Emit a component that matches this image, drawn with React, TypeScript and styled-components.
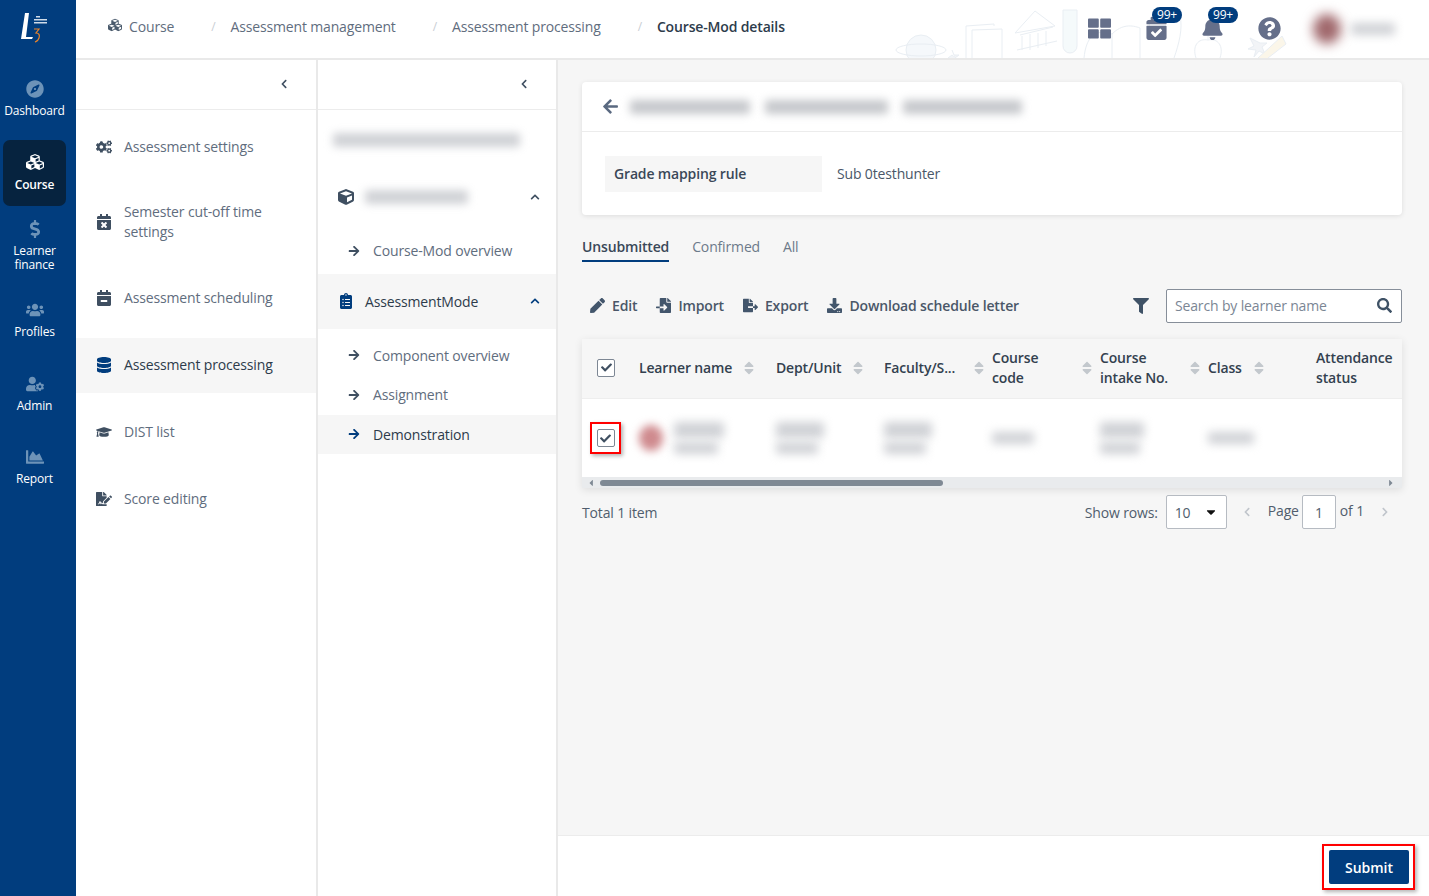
import React from 'react';
import styled, { createGlobalStyle } from 'styled-components';
import {
  FaArrowLeft, FaArrowRight, FaBell, FaCalendarCheck, FaCalendarMinus, FaCalendarTimes, FaCaretDown,
  FaCaretLeft, FaCaretRight, FaChartArea, FaCheck, FaChevronLeft, FaChevronRight, FaChevronUp,
  FaClipboardList, FaCogs, FaCompass, FaCube, FaCubes, FaDatabase, FaDollarSign, FaDownload, FaFileExport,
  FaFileImport, FaFileSignature, FaFilter, FaGraduationCap, FaPen, FaQuestionCircle, FaSearch, FaSortDown,
  FaSortUp, FaThLarge, FaUserCog, FaUsers,
} from 'react-icons/fa';

const GlobalStyle = createGlobalStyle`
  html, body { margin: 0; padding: 0; height: 100%; }
  body {
    font-family: "Open Sans", "Liberation Sans", sans-serif;
    font-size: 14px;
    letter-spacing: -0.15px;
    color: #5f6d7e;
  }
  * { box-sizing: border-box; }
`;

const Shell = styled.div`
  display: flex;
  width: 100vw;
  height: 100vh;
  overflow: hidden;
  background: #f6f6f6;
`;

/* left rail */
const Rail = styled.nav`
  width: 76px;
  flex: none;
  padding-left: 3px;
  background: #013d7e;
  display: flex;
  flex-direction: column;
`;

const Logo = styled.div`
  height: 67px;
  padding: 12px 0 0 17px;
`;

const RailItem = styled.div<{ $top: number; $h: number; $active?: boolean }>`
  width: 63px;
  margin-top: ${p => p.$top}px;
  height: ${p => p.$h}px;
  flex: none;
  padding-top: 13px;
  border-radius: 7px;
  background: ${p => (p.$active ? '#06233f' : 'transparent')};
  color: ${p => (p.$active ? '#fff' : '#6d93b8')};
  display: flex;
  flex-direction: column;
  align-items: center;
  font-size: 18px;
`;

const RailLabel = styled.div<{ $active?: boolean }>`
  margin-top: ${p => (p.$active ? 7 : 6)}px;
  width: 69px;
  font-size: 12px;
  line-height: 14px;
  text-align: center;
  color: #fff;
  font-weight: ${p => (p.$active ? 600 : 400)};
`;

const Body = styled.div`
  flex: 1;
  min-width: 0;
  display: flex;
  flex-direction: column;
`;

/* top bar */
const TopBar = styled.header`
  position: relative;
  height: 60px;
  flex: none;
  background: #fff;
  border-bottom: 2px solid #e9e9e9;
  display: flex;
  align-items: center;
  padding-left: 32px;
`;

const Decor = styled.svg`
  position: absolute;
  left: 812px;
  top: 0;
`;

const Crumb = styled.span<{ $current?: boolean }>`
  display: flex;
  align-items: center;
  gap: 7px;
  margin-top: -5px;
  color: ${p => (p.$current ? '#2d3b4b' : '#5f6d7e')};
  font-weight: ${p => (p.$current ? 600 : 400)};
  svg { color: #4a5a6c; margin-top: -4px; }
`;

const CrumbSep = styled.span`
  margin: -5px 15px 0 37px;
  color: #c9ced4;
  font-size: 12px;
`;

const TopIcons = styled.div`
  position: absolute;
  left: 1012px;
  top: 0;
  height: 58px;
  width: 341px;
  display: flex;
`;

const TopIcon = styled.div<{ $w: number }>`
  position: relative;
  width: ${p => p.$w}px;
  height: 58px;
  padding-top: 15px;
  color: #656f8a;
  font-size: 23px;
`;

const Badge = styled.span`
  position: absolute;
  left: 7px;
  top: 7px;
  width: 30px;
  height: 16px;
  border-radius: 8px;
  background: #013d7e;
  color: #fff;
  font-size: 12px;
  line-height: 16px;
  text-align: center;
`;

const Profile = styled.div`
  position: absolute;
  left: 205px;
  top: 0;
  width: 136px;
  height: 58px;
  background: #fff;
  display: flex;
  align-items: center;
  padding-left: 20px;
  gap: 10px;
`;

const Columns = styled.div`
  flex: 1;
  min-height: 0;
  display: flex;
`;

/* menu panels */
const Panel = styled.aside<{ $w: number }>`
  width: ${p => p.$w}px;
  flex: none;
  background: #fff;
  border-right: 2px solid #e9e9e9;
  display: flex;
  flex-direction: column;
`;

const PanelHead = styled.div`
  height: 50px;
  flex: none;
  border-bottom: 1px solid #ececec;
  display: flex;
  align-items: center;
  justify-content: flex-end;
  padding: 0 27px 2px 0;
  font-size: 10px;
  color: #3f4f61;
`;

const MenuList = styled.div`
  padding-top: 10px;
  display: flex;
  flex-direction: column;
  gap: 12px;
`;

const MenuRow = styled.div<{ $active?: boolean }>`
  min-height: 55px;
  padding: 15px 30px 17px 20px;
  display: flex;
  align-items: center;
  gap: 12px;
  line-height: 20px;
  background: ${p => (p.$active ? '#f6f6f6' : 'transparent')};
  color: ${p => (p.$active ? '#2d3b4b' : '#5f6d7e')};
  svg { flex: none; font-size: 16px; color: ${p => (p.$active ? '#013d7e' : '#3f4f61')}; }
`;

const TreeTitle = styled.div`
  height: 59px;
  padding: 23px 0 0 15px;
`;

const GroupRow = styled.div<{ $active?: boolean }>`
  height: 55px;
  padding: 0 16px 0 20px;
  display: flex;
  align-items: center;
  gap: 11px;
  background: ${p => (p.$active ? '#f6f6f6' : 'transparent')};
  color: #2d3b4b;
  svg { flex: none; color: ${p => (p.$active ? '#013d7e' : '#3f4f61')}; }
`;

const GroupText = styled.span`
  flex: 1;
  min-width: 0;
`;

const SubList = styled.div<{ $top: number; $bottom: number }>`
  padding: ${p => p.$top}px 0 ${p => p.$bottom}px;
`;

const SubRow = styled.div<{ $active?: boolean }>`
  height: 39.5px;
  padding-left: 30px;
  display: flex;
  align-items: center;
  gap: 13px;
  background: ${p => (p.$active ? '#f6f6f6' : 'transparent')};
  color: ${p => (p.$active ? '#2d3b4b' : '#5f6d7e')};
  svg { font-size: 12px; color: ${p => (p.$active ? '#013d7e' : '#3f4f61')}; }
`;

const Blur = styled.div<{ $w: number; $h: number; $c?: string; $round?: boolean; $r?: number }>`
  flex: none;
  width: ${p => p.$w}px;
  height: ${p => p.$h}px;
  background: ${p => p.$c || '#d0d2d6'};
  border-radius: ${p => (p.$round ? '50%' : '3px')};
  filter: blur(${p => p.$r ?? 4}px);
`;

/* main area */
const Main = styled.main`
  flex: 1;
  min-width: 0;
  display: flex;
  flex-direction: column;
`;

const Content = styled.div`
  flex: 1;
  min-height: 0;
  padding: 22px 27px 0 24px;
`;

const Card = styled.section`
  height: 133px;
  background: #fff;
  border-radius: 4px;
  box-shadow: 0 1px 5px rgba(0, 0, 0, 0.1);
`;

const CardHead = styled.div`
  height: 50px;
  border-bottom: 1px solid #ececec;
  padding-left: 20px;
  display: flex;
  align-items: center;
  font-size: 17px;
  color: #5a6980;
`;

const TitleBlurs = styled.div`
  margin-left: 11px;
  display: flex;
  gap: 15px;
`;

const CardBody = styled.div`
  padding: 24px 23px 0;
  display: flex;
  align-items: center;
  gap: 15px;
`;

const FieldLabel = styled.div`
  width: 217px;
  height: 36px;
  padding-left: 9px;
  background: #f6f6f6;
  line-height: 36px;
  font-weight: 600;
  color: #3a4858;
`;

const FieldValue = styled.div`
  margin-top: -2px;
  color: #4a5768;
`;

const Tabs = styled.div`
  margin-top: 22px;
  display: flex;
  gap: 23px;
`;

const Tab = styled.div<{ $active?: boolean }>`
  height: 25px;
  line-height: 20px;
  color: ${p => (p.$active ? '#3a4858' : '#6d7a8a')};
  font-weight: ${p => (p.$active ? 600 : 400)};
  border-bottom: ${p => (p.$active ? '2px solid #013d7e' : 'none')};
`;

const Toolbar = styled.div`
  margin-top: 27px;
  height: 34px;
  display: flex;
  align-items: center;
  padding-left: 8px;
  gap: 19px;
`;

const ToolButton = styled.div`
  display: flex;
  align-items: center;
  gap: 7px;
  padding-bottom: 2px;
  color: #4a5768;
  font-weight: 600;
  svg { font-size: 15px; color: #43566c; }
`;

const FilterIcon = styled.div`
  margin: -2px -2px 0 auto;
  height: 16px;
  font-size: 16px;
  color: #3f5266;
`;

const SearchBox = styled.div`
  width: 236px;
  height: 34px;
  background: #fff;
  border: 1px solid #868e99;
  border-radius: 2px;
  padding: 0 9px 2px 8px;
  display: flex;
  align-items: center;
  justify-content: space-between;
  color: #7b8694;
  svg { color: #3f5266; font-size: 15px; }
`;

const TableWrap = styled.div`
  margin-top: 16px;
  box-shadow: 0 2px 8px rgba(0, 0, 0, 0.1);
`;

const HeadRow = styled.div`
  height: 60px;
  padding: 0 0 2px 15px;
  background: #f6f6f6;
  border-bottom: 1px solid #eeeeee;
  display: grid;
  grid-template-columns: 42px 137px repeat(5, 108px) 1fr;
  align-items: center;
`;

const BodyRow = styled(HeadRow)`
  height: 78px;
  padding-bottom: 0;
  background: #fff;
  border-bottom: none;
`;

const HeadCell = styled.div<{ $spread?: boolean }>`
  display: flex;
  align-items: center;
  gap: 9px;
  width: ${p => (p.$spread ? '97px' : 'auto')};
  justify-content: ${p => (p.$spread ? 'space-between' : 'flex-start')};
  line-height: 20px;
  font-weight: 600;
  color: #33414f;
`;

const SortIcon = styled.span`
  position: relative;
  flex: none;
  width: 10px;
  height: 16px;
  color: #c3c8cd;
  font-size: 16px;
  svg { position: absolute; left: 0; top: 0; }
`;

const CheckBox = styled.div`
  width: 18px;
  height: 18px;
  background: #fff;
  border: 1px solid #7d8794;
  border-radius: 2px;
  display: flex;
  align-items: center;
  justify-content: center;
  color: #3f4f61;
  font-size: 11px;
`;

const Highlight = styled.div`
  width: 31px;
  height: 32px;
  margin-left: -7px;
  border: 2px solid #f00;
  box-shadow: 2px 2px 4px rgba(0, 0, 0, 0.3);
  display: flex;
  align-items: center;
  justify-content: center;
  background: #fff;
`;

const LearnerCell = styled.div`
  display: flex;
  align-items: center;
  gap: 11px;
`;

const BlurStack = styled.div`
  display: flex;
  flex-direction: column;
  gap: 4px;
`;

const ScrollBar = styled.div`
  height: 11px;
  background: #e9ebed;
  padding: 0 6px 0 4px;
  display: flex;
  align-items: center;
  font-size: 10px;
  color: #7f8994;
`;

const ScrollThumb = styled.div`
  width: 343px;
  height: 6px;
  margin-left: 4px;
  margin-right: auto;
  border-radius: 3px;
  background: #7f8994;
`;

const Pager = styled.div`
  margin-top: 7px;
  height: 34px;
  display: flex;
  align-items: center;
  color: #505d6d;
`;

const Total = styled.div`
  margin-right: auto;
`;

const SelectBox = styled.div`
  width: 61px;
  height: 34px;
  margin-left: 8px;
  padding: 0 8px 0 8px;
  background: #fff;
  border: 1px solid #b6bbc2;
  border-radius: 2px;
  display: flex;
  align-items: center;
  justify-content: space-between;
  svg { color: #111; font-size: 14px; }
`;

const PagerArrow = styled.div<{ $left: number; $right: number }>`
  margin: 0 ${p => p.$right}px 0 ${p => p.$left}px;
  font-size: 10px;
  height: 12px;
  color: #c0c5cb;
`;

const PageInput = styled.div`
  width: 34px;
  height: 34px;
  margin: 0 4px 0 3px;
  background: #fff;
  border: 1px solid #b6bbc2;
  border-radius: 2px;
  text-align: center;
  line-height: 34px;
`;

const PagerText = styled.span`
  margin-top: -3px;
`;

const SubmitBar = styled.footer`
  height: 61px;
  flex: none;
  background: #fff;
  border-top: 1px solid #ececec;
  display: flex;
  align-items: center;
  justify-content: flex-end;
  padding-right: 14px;
`;

const SubmitFrame = styled.div`
  padding: 4px 4px 4px 5px;
  border: 2px solid #f00;
  box-shadow: 2px 2px 4px rgba(0, 0, 0, 0.3);
  background: #fff;
  margin-top: 2px;
`;

const SubmitButton = styled.button`
  display: block;
  width: 80px;
  height: 34px;
  border: none;
  border-radius: 2px;
  background: #013d7e;
  color: #fff;
  font: 600 14px "Open Sans", sans-serif;
`;

const railItems = [
  { label: ['Dashboard'], icon: <FaCompass />, top: 0, h: 66 },
  { label: ['Course'], icon: <FaCubes />, top: 7, h: 66, active: true },
  { label: ['Learner', 'finance'], icon: <FaDollarSign />, top: 1, h: 80 },
  { label: ['Profiles'], icon: <FaUsers />, top: 1, h: 66 },
  { label: ['Admin'], icon: <FaUserCog />, top: 8, h: 66 },
  { label: ['Report'], icon: <FaChartArea />, top: 7, h: 66 },
];

const menuItems = [
  { label: 'Assessment settings', icon: <FaCogs /> },
  { label: 'Semester cut-off time settings', icon: <FaCalendarTimes /> },
  { label: 'Assessment scheduling', icon: <FaCalendarMinus /> },
  { label: 'Assessment processing', icon: <FaDatabase />, active: true },
  { label: 'DIST list', icon: <FaGraduationCap /> },
  { label: 'Score editing', icon: <FaFileSignature /> },
];

const L3Logo = () => (
  <svg width="30" height="32" viewBox="0 0 30 32">
    <path d="M5 1h4L6 25h7l-1 2H1z" fill="#fff" />
    <path d="M14 17h5l-3 4c3 0 4 2 3 5s-2 3-4 4" fill="none" stroke="#e8832a" strokeWidth="1.2" />
    <rect x="16" y="4" width="4" height="1.5" fill="#cfdbe8" />
    <rect x="14" y="7" width="13" height="1.5" fill="#cfdbe8" />
    <rect x="14" y="10" width="13" height="1.5" fill="#cfdbe8" />
  </svg>
);

const Sort = () => (
  <SortIcon>
    <FaSortUp />
    <FaSortDown />
  </SortIcon>
);

const Tick = () => (
  <CheckBox>
    <FaCheck />
  </CheckBox>
);

const App = () => {
  return (
    <Shell>
      <GlobalStyle />
      <Rail>
        <Logo>
          <L3Logo />
        </Logo>
        {railItems.map(item => (
          <RailItem key={item.label[0]} $top={item.top} $h={item.h} $active={item.active}>
            {item.icon}
            <RailLabel $active={item.active}>
              {item.label.map(line => <div key={line}>{line}</div>)}
            </RailLabel>
          </RailItem>
        ))}
      </Rail>
      <Body>
        <TopBar>
          <Decor width="410" height="58" viewBox="0 0 410 58" fill="none" stroke="#e9eef3" strokeWidth="1">
            <circle cx="33" cy="50" r="15" fill="#f5f8fb" />
            <ellipse cx="33" cy="50" rx="25" ry="6" />
            <path d="M78 58V26l28-2v2M84 58V30l30-1v29" />
            <path d="M127 33l20-22 20 15zM132 35l33-8M134 36v14M142 34v16M150 33v15M158 31v15M129 50l40-9" />
            <path d="M175 10h14v36a7 7 0 0 1-14 0z" fill="#f5fafb" />
            <path d="M196 58c2-20 10-30 28-24v24M224 34c10-10 20-9 28-6v30" />
            <path d="M262 30c-6-20 22-28 30-14 3 12-1 28-6 42" />
            <path d="M308 58c-4-12 2-20 12-18 10-2 16 6 12 18M320 40v-6" />
            <path d="M362 38l4 8-6 3 8 1-2 7 5-6 6 3-3-7 5-4-7 0z" fill="#f2f4f7" />
            <path d="M370 58l24-22 4 8-18 14" fill="#fbf6e9" />
            <path d="M64 50l2 5 5 0-4 3M68 58l-4-3-4 3" fill="#f2f4f7" />
          </Decor>
          <Crumb><FaCubes size={14} />Course</Crumb>
          <CrumbSep>/</CrumbSep>
          <Crumb>Assessment management</Crumb>
          <CrumbSep>/</CrumbSep>
          <Crumb>Assessment processing</Crumb>
          <CrumbSep>/</CrumbSep>
          <Crumb $current>Course-Mod details</Crumb>
          <TopIcons>
            <TopIcon $w={57}><FaThLarge /></TopIcon>
            <TopIcon $w={56}><FaCalendarCheck /><Badge>99+</Badge></TopIcon>
            <TopIcon $w={57}><FaBell /><Badge>99+</Badge></TopIcon>
            <TopIcon $w={30}><FaQuestionCircle /></TopIcon>
            <Profile>
              <Blur $w={28} $h={30} $c="#a0686c" $round $r={6} />
              <Blur $w={44} $h={12} $r={5} />
            </Profile>
          </TopIcons>
        </TopBar>
        <Columns>
          <Panel $w={242}>
            <PanelHead><FaChevronLeft /></PanelHead>
            <MenuList>
              {menuItems.map(item => (
                <MenuRow key={item.label} $active={item.active}>
                  {item.icon}
                  <span>{item.label}</span>
                </MenuRow>
              ))}
            </MenuList>
          </Panel>
          <Panel $w={240}>
            <PanelHead><FaChevronLeft /></PanelHead>
            <TreeTitle><Blur $w={187} $h={14} /></TreeTitle>
            <GroupRow>
              <FaCube size={16} />
              <GroupText><Blur $w={103} $h={14} /></GroupText>
              <FaChevronUp size={10} />
            </GroupRow>
            <SubList $top={7} $bottom={3}>
              <SubRow><FaArrowRight /><span>Course-Mod overview</span></SubRow>
            </SubList>
            <GroupRow $active>
              <FaClipboardList size={16} />
              <GroupText>AssessmentMode</GroupText>
              <FaChevronUp size={10} />
            </GroupRow>
            <SubList $top={7} $bottom={0}>
              <SubRow><FaArrowRight /><span>Component overview</span></SubRow>
              <SubRow><FaArrowRight /><span>Assignment</span></SubRow>
              <SubRow $active><FaArrowRight /><span>Demonstration</span></SubRow>
            </SubList>
          </Panel>
          <Main>
            <Content>
              <Card>
                <CardHead>
                  <FaArrowLeft />
                  <TitleBlurs>
                    <Blur $w={120} $h={14} $c="#c6c8cc" />
                    <Blur $w={123} $h={14} $c="#c6c8cc" />
                    <Blur $w={119} $h={14} $c="#c6c8cc" />
                  </TitleBlurs>
                </CardHead>
                <CardBody>
                  <FieldLabel>Grade mapping rule</FieldLabel>
                  <FieldValue>Sub 0testhunter</FieldValue>
                </CardBody>
              </Card>
              <Tabs>
                <Tab $active>Unsubmitted</Tab>
                <Tab>Confirmed</Tab>
                <Tab>All</Tab>
              </Tabs>
              <Toolbar>
                <ToolButton><FaPen />Edit</ToolButton>
                <ToolButton><FaFileImport />Import</ToolButton>
                <ToolButton><FaFileExport />Export</ToolButton>
                <ToolButton><FaDownload />Download schedule letter</ToolButton>
                <FilterIcon><FaFilter /></FilterIcon>
                <SearchBox>Search by learner name<FaSearch /></SearchBox>
              </Toolbar>
              <TableWrap>
                <HeadRow>
                  <Tick />
                  <HeadCell>Learner name<Sort /></HeadCell>
                  <HeadCell>Dept/Unit<Sort /></HeadCell>
                  <HeadCell $spread>Faculty/S...<Sort /></HeadCell>
                  <HeadCell $spread><span>Course<br />code</span><Sort /></HeadCell>
                  <HeadCell $spread><span>Course<br />intake No.</span><Sort /></HeadCell>
                  <HeadCell>Class<Sort /></HeadCell>
                  <HeadCell><span>Attendance<br />status</span></HeadCell>
                </HeadRow>
                <BodyRow>
                  <Highlight><Tick /></Highlight>
                  <LearnerCell>
                    <Blur $w={24} $h={26} $c="#cf8a8e" $round />
                    <BlurStack><Blur $w={50} $h={16} $r={5} /><Blur $w={44} $h={12} $r={5} /></BlurStack>
                  </LearnerCell>
                  <BlurStack><Blur $w={48} $h={16} $r={5} /><Blur $w={42} $h={12} $r={5} /></BlurStack>
                  <BlurStack><Blur $w={48} $h={16} $r={5} /><Blur $w={42} $h={12} $r={5} /></BlurStack>
                  <Blur $w={42} $h={12} $r={5} />
                  <BlurStack><Blur $w={44} $h={16} $r={5} /><Blur $w={40} $h={12} $r={5} /></BlurStack>
                  <Blur $w={46} $h={12} $r={5} />
                  <div />
                </BodyRow>
                <ScrollBar>
                  <FaCaretLeft />
                  <ScrollThumb />
                  <FaCaretRight />
                </ScrollBar>
              </TableWrap>
              <Pager>
                <Total>Total 1 item</Total>
                <span>Show rows:</span>
                <SelectBox>10<FaCaretDown /></SelectBox>
                <PagerArrow $left={15} $right={16}><FaChevronLeft /></PagerArrow>
                <PagerText>Page</PagerText>
                <PageInput>1</PageInput>
                <PagerText>of 1</PagerText>
                <PagerArrow $left={16} $right={12}><FaChevronRight /></PagerArrow>
              </Pager>
            </Content>
            <SubmitBar>
              <SubmitFrame>
                <SubmitButton>Submit</SubmitButton>
              </SubmitFrame>
            </SubmitBar>
          </Main>
        </Columns>
      </Body>
    </Shell>
  );
};

export default App;
